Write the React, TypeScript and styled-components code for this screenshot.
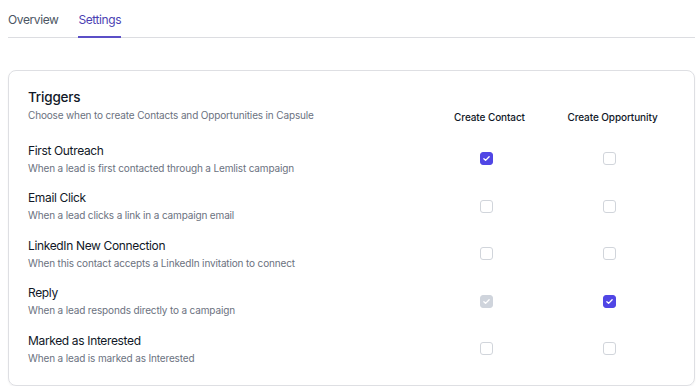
import React from "react";
import styled, { createGlobalStyle } from "styled-components";

const GlobalStyle = createGlobalStyle`
  html, body {
    margin: 0;
    padding: 0;
    background: #ffffff;
  }
  body {
    font-family: Inter, "Noto Sans", sans-serif;
    color: #111827;
  }
`;

const Page = styled.div`
  padding: 0 5px 0 8px;
`;

const Tabs = styled.div`
  display: flex;
  gap: 20px;
  border-bottom: 1px solid #dcdde1;
`;

const Tab = styled.div<{ $active?: boolean }>`
  font-size: 12px;
  letter-spacing: -0.4px;
  line-height: 16px;
  padding: 12px 0 8px;
  color: ${(p) => (p.$active ? "#4c3fb3" : "#4b5563")};
  border-bottom: 2px solid ${(p) => (p.$active ? "#5b4fc7" : "transparent")};
  margin-bottom: -1px;
`;

const Card = styled.div`
  margin-top: 32px;
  border: 1px solid #dedfe3;
  border-radius: 8px;
  box-shadow: 0 1px 2px rgba(16, 24, 40, 0.06);
  padding: 17px 20px 19px 19px;
`;

const Grid = styled.div`
  display: grid;
  grid-template-columns: 1fr 123px 123px;
  row-gap: 13.5px;
  align-items: center;
`;

const Header = styled.div`
  margin-bottom: 5px;
`;

const Title = styled.div<{ $big?: boolean }>`
  font-size: ${(p) => (p.$big ? 13.5 : 12)}px;
  font-weight: ${(p) => (p.$big ? 500 : 400)};
  letter-spacing: ${(p) => (p.$big ? -0.2 : -0.35)}px;
  line-height: 18px;
  color: #111827;
`;

const Sub = styled.div<{ $gap?: number }>`
  margin-top: ${(p) => p.$gap ?? 0}px;
  font-size: 10px;
  letter-spacing: -0.15px;
  line-height: 16px;
  color: #6b7280;
`;

const ColHead = styled.div`
  align-self: end;
  text-align: center;
  font-size: 10px;
  font-weight: 500;
  letter-spacing: -0.1px;
  line-height: 16px;
  color: #111827;
  margin-bottom: 3px;
`;

const Cell = styled.div`
  display: flex;
  justify-content: center;
  padding-right: 6px;
`;

const Box = styled.span<{ $checked?: boolean; $disabled?: boolean }>`
  width: 13px;
  height: 13px;
  box-sizing: border-box;
  border-radius: 3px;
  display: inline-flex;
  align-items: center;
  justify-content: center;
  border: 1px solid
    ${(p) => (p.$checked ? (p.$disabled ? "#cfd4dc" : "#5046e5") : "#d1d5db")};
  background: ${(p) =>
    p.$checked ? (p.$disabled ? "#cfd4dc" : "#5046e5") : "#ffffff"};
`;

const Check = () => (
  <svg width="9" height="9" viewBox="0 0 12 12" fill="none">
    <path
      d="M2.5 6.2l2.3 2.3 4.7-4.8"
      stroke="#ffffff"
      strokeWidth="1.8"
      strokeLinecap="round"
      strokeLinejoin="round"
    />
  </svg>
);

type Trigger = {
  title: string;
  desc: string;
  contact: boolean;
  contactDisabled?: boolean;
  opportunity: boolean;
};

const triggers: Trigger[] = [
  {
    title: "First Outreach",
    desc: "When a lead is first contacted through a Lemlist campaign",
    contact: true,
    opportunity: false,
  },
  {
    title: "Email Click",
    desc: "When a lead clicks a link in a campaign email",
    contact: false,
    opportunity: false,
  },
  {
    title: "LinkedIn New Connection",
    desc: "When this contact accepts a LinkedIn invitation to connect",
    contact: false,
    opportunity: false,
  },
  {
    title: "Reply",
    desc: "When a lead responds directly to a campaign",
    contact: true,
    contactDisabled: true,
    opportunity: true,
  },
  {
    title: "Marked as Interested",
    desc: "When a lead is marked as Interested",
    contact: false,
    opportunity: false,
  },
];

const Checkbox: React.FC<{ checked: boolean; disabled?: boolean }> = ({
  checked,
  disabled,
}) => (
  <Cell>
    <Box $checked={checked} $disabled={disabled}>
      {checked && <Check />}
    </Box>
  </Cell>
);

export default function App() {
  return (
    <Page>
      <GlobalStyle />
      <Tabs>
        <Tab>Overview</Tab>
        <Tab $active>Settings</Tab>
      </Tabs>
      <Card>
        <Grid>
          <Header>
            <Title $big>Triggers</Title>
            <Sub $gap={1}>
              Choose when to create Contacts and Opportunities in Capsule
            </Sub>
          </Header>
          <ColHead>Create Contact</ColHead>
          <ColHead>Create Opportunity</ColHead>
          {triggers.map((t) => (
            <React.Fragment key={t.title}>
              <div>
                <Title>{t.title}</Title>
                <Sub>{t.desc}</Sub>
              </div>
              <Checkbox checked={t.contact} disabled={t.contactDisabled} />
              <Checkbox checked={t.opportunity} />
            </React.Fragment>
          ))}
        </Grid>
      </Card>
    </Page>
  );
}
